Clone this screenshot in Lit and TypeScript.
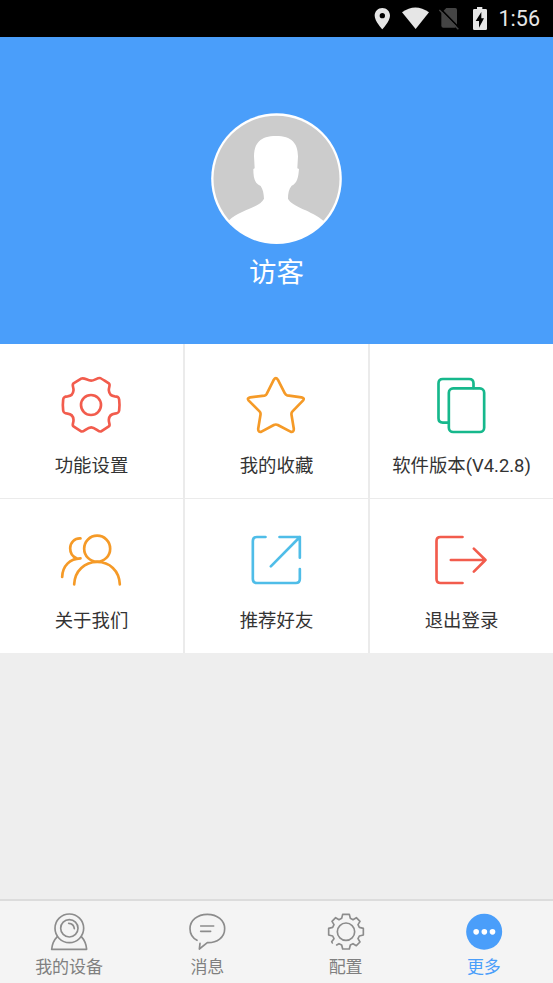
import { LitElement, html, css, svg } from "lit";
import { customElement } from "lit/decorators.js";

const CELLS = [
  {
    label: "功能设置", color: "#f25c4d", box: "60.5 24 192 192",
    art: svg`<path d="M154 47 C163 47 171 39 180 39 C182 39 184 40 207 55 C213 60 206 67 207 76 C208 86 214 93 225 94 C235 94 237 97 238 104 Q240 120 238 136 C237 143 235 145 225 146 C214 147 208 154 207 164 C206 173 213 180 207 184 L184 199 C178 203 166 187 154 187 C142 187 130 203 124 199 L101 184 C95 180 102 173 101 164 C100 154 94 147 83 146 C73 145 71 143 70 136 Q68 120 70 104 C71 97 73 94 83 94 C94 93 100 86 101 76 C102 67 95 60 101 55 L124 41 C133 36 142 47 154 47Z"/><circle cx="153.500" cy="120" r="30"/>`,
  },
  {
    label: "我的收藏", color: "#f59a27", box: "75.5 24 192 192",
    art: svg`<path d="M162 44 Q168 35 174 44 L195 85 Q197 90 202 91 L245 97 Q255 99 250 106 L218 139 Q214 143 215 149 L222 192 Q222 203 212 200 L174 180 Q168 177 162 180 L125 200 Q115 203 115 192 L122 149 Q123 143 119 139 L86 106 Q81 99 91 97 L134 92 Q139 91 141 86Z"/>`,
  },
  {
    label: "软件版本(V4.2.8)", color: "#16b88c", box: "195.5 24 192 192",
    art: svg`<path d="M250 173 H234 Q221 173 221 160 V55 Q221 42 234 42 H313 Q326 42 326 55 V69"/><rect x="252" y="70" width="106" height="131" rx="13"/>`,
  },
  {
    label: "关于我们", color: "#f59a27", box: "60.5 24 192 192",
    art: svg`<circle cx="172" cy="86" r="39"/><path d="M103 193 C105 151 135 126 172 126 C209 126 238 151 240 193 M122 55 C104 54 91 68 91 85 C91 99 98 110 110 115 M122 115 C90 116 68 138 67 171"/>`,
  },
  {
    label: "推荐好友", color: "#4fbde8", box: "75.5 24 192 192",
    art: svg`<path d="M137 51 H111 Q99 51 99 63 V177 Q99 189 111 189 H228 Q240 189 240 177 V147 M179 51 H240 V113 M240 51 L153 139"/>`,
  },
  {
    label: "退出登录", color: "#f25c4d", box: "90.5 24 192 192",
    art: svg`<path d="M188 51 H122 Q110 51 110 63 V177 Q110 189 122 189 H188 M153 120 H257 M222 86 L257 120 L222 155"/>`,
  },
];

const TABS = [
  {
    label: "我的设备", box: "88 57 120 120", active: false,
    art: svg`<circle cx="149" cy="106" r="43"/><circle cx="149" cy="106" r="26"/><path d="M147 91 Q162 91 164 107 M113 131 Q98 146 96 169 H201 Q199 146 185 131"/>`,
  },
  {
    label: "消息", box: "68 57 120 120", active: false,
    art: svg`<path d="M98 142 C84 134 77 122 77 107 C77 82 99 64 129 64 C159 64 181 82 181 107 C181 133 158 150 129 149 L105 168 L107 151 M109 99 H148 M109 115 H139"/>`,
  },
  {
    label: "配置", box: "63 57 120 120", active: false,
    art: svg`<g transform="translate(123 116)"><circle r="26"/><path d="M-41 34 L-43 30 L-36 21 L-40 13 L-52 10 V-10 L-40 -13 L-36 -21 L-42 -31 L-31 -42 L-21 -36 L-13 -40 L-10 -52 H10 L13 -40 L21 -36 L31 -42 L42 -31 L36 -21 L40 -13 L52 -10 V10 L40 13 L36 21 L42 31 L31 42 L21 36 L13 40 L10 52 H-10 L-13 40 L-21 36 L-28 40"/></g>`,
  },
  {
    label: "更多", box: "72 57 120 120", active: true,
    art: svg`<circle cx="132.500" cy="116" r="54" fill="#4a9efa" stroke="none"/><g fill="#fff" stroke="none"><circle cx="108.500" cy="116.500" r="8.500"/><circle cx="133" cy="116.500" r="8.500"/><circle cx="157.500" cy="116.500" r="8.500"/></g>`,
  },
];

@customElement("status-bar")
class StatusBar extends LitElement {
  static styles = css`
    :host { display: flex; height: 37px; background: #000; align-items: center; justify-content: flex-end; padding-right: 13px; color: #e6e6e6; box-sizing: border-box; }
    svg { display: block; fill: currentColor; }
    .time { font: 400 21.5px/37px Roboto, sans-serif; margin-left: 10px; }
  `;
  render() {
    return html`
      <svg width="117" height="37" viewBox="36 0 351 111">
        <path fill-rule="evenodd" d="M67 24 C54 24 44 34 44 47 C44 63 67 88 67 88 S90 63 90 47 C90 34 80 24 67 24Z M67 39 A8 8 0 1 1 67 55 A8 8 0 1 1 67 39Z"/>
        <path d="M126 37 Q166 8 207 37 L167 87Z"/>
        <path fill="#444" d="M259 24 H286 Q291 24 291 29 V77 L285 83 H250 Q244 83 244 77 V39Z"/>
        <path fill="none" stroke="#000" stroke-width="5" d="M241 26 L298 84"/>
        <path fill="none" stroke="#444" stroke-width="4" d="M238 30 L295 88"/>
        <path fill-rule="evenodd" d="M351 21 H367 V27 H377 Q381 27 381 31 V86 Q381 90 377 90 H343 Q339 90 339 86 V31 Q339 27 343 27 H351Z M364 36 L347 63 H357 V83 L372 55 H364Z"/>
      </svg>
      <span class="time">1:56</span>`;
  }
}

@customElement("profile-header")
class ProfileHeader extends LitElement {
  static styles = css`
    :host { display: flex; flex-direction: column; align-items: center; height: 307px; background: #4a9efa; padding-top: 76px; box-sizing: border-box; }
    svg { display: block; }
    .name { color: #fff; font: 400 27.5px/40px "Noto Sans CJK SC", sans-serif; margin-top: 6px; }
  `;
  render() {
    return html`
      <svg width="131" height="131" viewBox="33 24 393 393">
        <defs><clipPath id="disc"><circle cx="229.500" cy="221" r="192"/></clipPath></defs>
        <circle cx="229.500" cy="221" r="196" fill="#fff"/>
        <circle cx="229.500" cy="221" r="189" fill="#ccc"/>
        <path clip-path="url(#disc)" fill="#fff" d="M228 93 C181 93 162 115 162 154 L164 190 L160 192 C160 218 164 236 182 243 C189 253 191 265 192 281 C180 308 119 314 86 347 L70 420 H390 L370 347 C337 317 276 306 264 281 C264 265 266 253 275 242 C291 235 295 218 297 192 L292 190 L294 154 C294 115 275 93 228 93Z"/>
      </svg>
      <div class="name">访客</div>`;
  }
}

@customElement("app-root")
class AppRoot extends LitElement {
  static styles = css`
    :host { display: flex; flex-direction: column; height: 983px; background: #eee; overflow: hidden; font-family: Roboto, "Noto Sans CJK SC", sans-serif; }
    svg { display: block; fill: none; stroke-linecap: round; stroke-linejoin: round; }
    .grid { display: grid; grid-template-columns: repeat(3, 183px); column-gap: 2px; row-gap: 1px; grid-template-rows: 154px 154px; background: #ebebeb; }
    .cell { background: #fff; display: flex; flex-direction: column; align-items: center; padding-top: 29px; box-sizing: border-box; }
    .cell svg { width: 64px; height: 64px; stroke: currentColor; stroke-width: 8px; flex: none; }
    .caption { color: #333; font-size: 18.4px; line-height: 28px; margin-top: 15px; white-space: nowrap; }
    .space { flex: 1; }
    .tabs { display: grid; grid-template-columns: repeat(4, 1fr); height: 84px; box-sizing: border-box; border-top: 2px solid #dcdcdc; background: #f4f4f4; }
    .tab { display: flex; flex-direction: column; align-items: center; padding-top: 11px; color: #808080; }
    .tab svg { width: 40px; height: 40px; stroke: #8c8c8c; stroke-width: 5px; flex: none; }
    .tab span { font-size: 17px; line-height: 24px; margin-top: 3px; }
    .tab.active { color: #4a9efa; }
  `;
  render() {
    return html`
      <status-bar></status-bar>
      <profile-header></profile-header>
      <div class="grid">
        ${CELLS.map(c => html`<div class="cell">
          <svg viewBox=${c.box} style="color:${c.color}">${c.art}</svg>
          <div class="caption">${c.label}</div>
        </div>`)}
      </div>
      <div class="space"></div>
      <nav class="tabs">
        ${TABS.map(t => html`<div class="tab ${t.active ? "active" : ""}">
          <svg viewBox=${t.box}>${t.art}</svg>
          <span>${t.label}</span>
        </div>`)}
      </nav>`;
  }
}
